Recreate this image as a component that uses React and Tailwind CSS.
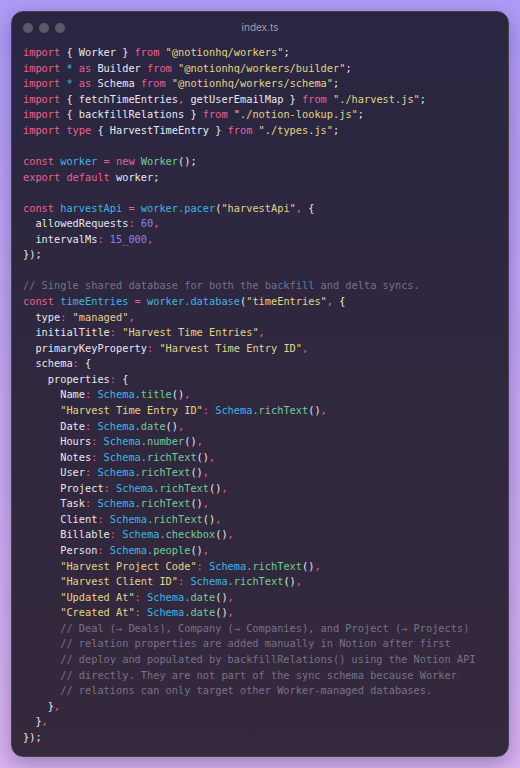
import React from 'react';

// token colours
const K = 'text-[#ec5f93]'; // keyword
const V = 'text-[#3db4e6]'; // variable / object
const F = 'text-[#72cc95]'; // function / method
const S = 'text-[#e2d488]'; // string
const N = 'text-[#8d80f0]'; // number
const P = 'text-[#ec5f93]'; // punctuation
const C = 'text-[#77718a]'; // comment
const T = 'text-[#e9e6f0]'; // plain

const lines = [
  [['import', K], [' { Worker } ', T], ['from', K], [' "@notionhq/workers"', S], [';', T]],
  [['import', K], [' * ', V], ['as', K], [' Builder ', T], ['from', K], [' "@notionhq/workers/builder"', S], [';', T]],
  [['import', K], [' * ', V], ['as', K], [' Schema ', T], ['from', K], [' "@notionhq/workers/schema"', S], [';', T]],
  [['import', K], [' { fetchTimeEntries', T], [',', P], [' getUserEmailMap } ', T], ['from', K], [' "./harvest.js"', S], [';', T]],
  [['import', K], [' { backfillRelations } ', T], ['from', K], [' "./notion-lookup.js"', S], [';', T]],
  [['import type', K], [' { HarvestTimeEntry } ', T], ['from', K], [' "./types.js"', S], [';', T]],
  [],
  [['const', K], [' worker ', V], ['=', P], [' new ', K], ['Worker', F], ['();', T]],
  [['export default', K], [' worker;', T]],
  [],
  [['const', K], [' harvestApi ', V], ['=', P], [' worker.pacer', V], ['(', T], ['"harvestApi"', S], [',', P], [' {', T]],
  [['  allowedRequests', T], [':', P], [' 60', N], [',', P]],
  [['  intervalMs', T], [':', P], [' 15_000', N], [',', P]],
  [['});', T]],
  [],
  [['// Single shared database for both the backfill and delta syncs.', C]],
  [['const', K], [' timeEntries ', V], ['=', P], [' worker.database', V], ['(', T], ['"timeEntries"', S], [',', P], [' {', T]],
  [['  type', T], [':', P], [' "managed"', S], [',', P]],
  [['  initialTitle', T], [':', P], [' "Harvest Time Entries"', S], [',', P]],
  [['  primaryKeyProperty', T], [':', P], [' "Harvest Time Entry ID"', S], [',', P]],
  [['  schema', T], [':', P], [' {', T]],
  [['    properties', T], [':', P], [' {', T]],
  [['      Name', T], [':', P], [' Schema', V], ['.title', F], ['()', T], [',', P]],
  [['      "Harvest Time Entry ID"', S], [':', P], [' Schema', V], ['.richText', F], ['()', T], [',', P]],
  [['      Date', T], [':', P], [' Schema', V], ['.date', F], ['()', T], [',', P]],
  [['      Hours', T], [':', P], [' Schema', V], ['.number', F], ['()', T], [',', P]],
  [['      Notes', T], [':', P], [' Schema', V], ['.richText', F], ['()', T], [',', P]],
  [['      User', T], [':', P], [' Schema', V], ['.richText', F], ['()', T], [',', P]],
  [['      Project', T], [':', P], [' Schema', V], ['.richText', F], ['()', T], [',', P]],
  [['      Task', T], [':', P], [' Schema', V], ['.richText', F], ['()', T], [',', P]],
  [['      Client', T], [':', P], [' Schema', V], ['.richText', F], ['()', T], [',', P]],
  [['      Billable', T], [':', P], [' Schema', V], ['.checkbox', F], ['()', T], [',', P]],
  [['      Person', T], [':', P], [' Schema', V], ['.people', F], ['()', T], [',', P]],
  [['      "Harvest Project Code"', S], [':', P], [' Schema', V], ['.richText', F], ['()', T], [',', P]],
  [['      "Harvest Client ID"', S], [':', P], [' Schema', V], ['.richText', F], ['()', T], [',', P]],
  [['      "Updated At"', S], [':', P], [' Schema', V], ['.date', F], ['()', T], [',', P]],
  [['      "Created At"', S], [':', P], [' Schema', V], ['.date', F], ['()', T], [',', P]],
  [['      // Deal (\u2192 Deals), Company (\u2192 Companies), and Project (\u2192 Projects)', C]],
  [['      // relation properties are added manually in Notion after first', C]],
  [['      // deploy and populated by backfillRelations() using the Notion API', C]],
  [['      // directly. They are not part of the sync schema because Worker', C]],
  [['      // relations can only target other Worker-managed databases.', C]],
  [['    }', T], [',', P]],
  [['  }', T], [',', P]],
  [['});', T]],
];

const App = () => {
  return (
    <div className="h-[768px] w-[520px] p-[11px] bg-gradient-to-b from-[#ae9bf6] to-[#d9b3ef]">
      <div className="h-full rounded-[12px] border border-[#453f55] bg-gradient-to-b from-[#2a2641] to-[#35293c] shadow-[0_6px_20px_rgba(40,20,80,0.35)] flex flex-col">
        <div className="relative h-[30px] flex items-center px-[11px] pt-[1px]">
          <div className="flex gap-[6px]">
            <span className="w-[10px] h-[10px] rounded-full bg-[#5c5869]" />
            <span className="w-[10px] h-[10px] rounded-full bg-[#5c5869]" />
            <span className="w-[10px] h-[10px] rounded-full bg-[#5c5869]" />
          </div>
          <div className="absolute inset-x-0 top-[8px] text-center text-[10px] text-[#a19cab] font-['Inter',sans-serif]">
            index.ts
          </div>
        </div>
        <pre className="pl-[11px] pt-[3px] font-['DejaVu_Sans_Mono',monospace] text-[10.3px] leading-[15.57px]">
          {lines.map((line, i) => (
            <div key={i} className="h-[15.57px] whitespace-pre">
              {line.map(([txt, cls], j) => (
                <span key={j} className={cls}>{txt}</span>
              ))}
            </div>
          ))}
        </pre>
      </div>
    </div>
  );
};

export default App;
